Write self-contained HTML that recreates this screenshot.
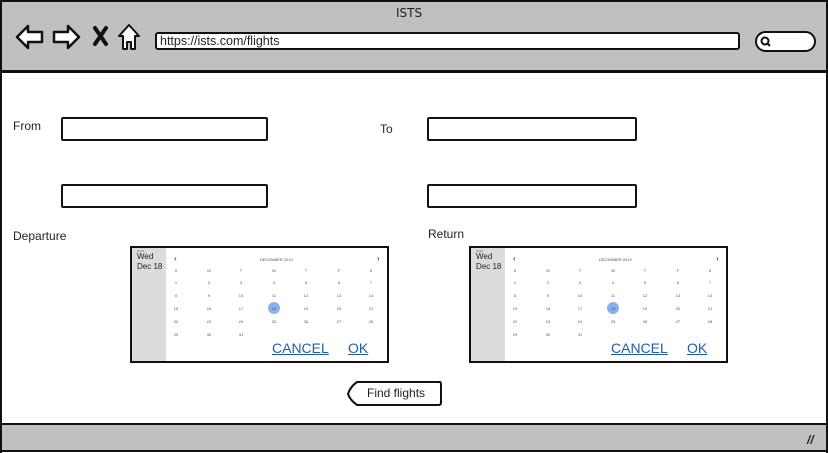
<!DOCTYPE html>
<html><head><style>
*{margin:0;padding:0;box-sizing:border-box}
body{width:828px;height:453px;background:#fff;position:relative;overflow:hidden;font-family:"Liberation Sans",sans-serif;color:#222}
.a{position:absolute}
.box{position:absolute;border:2px solid #111;background:#fff;border-radius:2px}
.lbl{position:absolute;font-size:12px}
.cal{position:absolute;width:259px;height:117px;border:2px solid #111;background:#fff}
.cal .side{position:absolute;left:0;top:0;width:34px;height:113px;background:#dcdcdc}
.cal .t{position:absolute;font-size:4px;color:#555;text-align:center;width:12px}
.cal .lnk{position:absolute;font-size:14px;color:#1f5fa8;text-decoration:underline}
</style></head><body>
<div class="a" style="left:0;top:0;width:828px;height:73px;background:#c0c0c0;border:2px solid #111;border-bottom:3px solid #111"></div>
<div class="a" style="left:396px;top:6px;font-size:12px;color:#222;font-family:'DejaVu Sans',sans-serif">ISTS</div>
<svg class="a" style="left:14px;top:22px" width="130" height="30" viewBox="0 0 130 30">
<path d="M3 15 L14 4 L14 10 L28 10 L28 20 L14 20 L14 26 Z" fill="#fff" stroke="#111" stroke-width="2.5" stroke-linejoin="round"/>
<path d="M65 15 L54 4 L54 10 L40 10 L40 20 L54 20 L54 26 Z" fill="#fff" stroke="#111" stroke-width="2.5" stroke-linejoin="round"/>
<path d="M81 6 L92 22 M92 6 L81 22" stroke="#111" stroke-width="4" stroke-linecap="round"/>
<path d="M115 3 L105 14 L109 14 L109 27 L113 27 L113 20 L117 20 L117 27 L121 27 L121 14 L125 14 Z" fill="#fff" stroke="#111" stroke-width="2" stroke-linejoin="round"/>
</svg>
<div class="box" style="left:155px;top:32px;width:585px;height:18px;border-radius:3px"></div>
<div class="a" style="left:160px;top:34px;font-size:12.5px">https://ists.com/flights</div>
<div class="box" style="left:755px;top:31px;width:61px;height:21px;border-radius:11px"></div>
<svg class="a" style="left:760px;top:36px" width="12" height="12"><circle cx="5" cy="5" r="3.5" fill="none" stroke="#111" stroke-width="2"/><path d="M7 7 L10 10" stroke="#111" stroke-width="2"/></svg>
<div class="a" style="left:0;top:72px;width:828px;height:381px;border-left:2px solid #111;border-right:2px solid #111"></div>
<div class="a" style="left:0;top:423px;width:828px;height:29px;background:#c0c0c0;border:2px solid #111"></div>
<div class="a" style="left:807px;top:433px;font-size:12px;font-weight:bold;font-style:italic">//</div>

<div class="lbl" style="left:13px;top:119px">From</div>
<div class="box" style="left:61px;top:117px;width:207px;height:24px"></div>
<div class="lbl" style="left:380px;top:122px">To</div>
<div class="box" style="left:427px;top:117px;width:210px;height:24px"></div>
<div class="box" style="left:61px;top:184px;width:207px;height:24px"></div>
<div class="box" style="left:427px;top:184px;width:210px;height:24px"></div>
<div class="lbl" style="left:13px;top:229px">Departure</div>
<div class="lbl" style="left:428px;top:227px">Return</div>

<div id="c1" class="cal" style="left:130px;top:246px"></div>
<div id="c2" class="cal" style="left:469px;top:246px"></div>

<svg class="a" style="left:345px;top:380px" width="98" height="28"><path d="M12 2 L95 2 Q96 2 96 5 L96 23 Q96 25 93 25 L12 25 Q5 20 3 14 Q5 7 12 2 Z" fill="#fff" stroke="#111" stroke-width="2"/></svg>
<div class="a" style="left:367px;top:386px;font-size:12px">Find flights</div>
<script>
function fill(id){
 var c=document.getElementById(id),h='<div class="side"></div>';
 h+='<div class="a" style="left:5px;top:1px;font-size:3px;color:#666">2019</div>';
 h+='<div class="a" style="left:5px;top:4px;font-size:8px">Wed</div>';
 h+='<div class="a" style="left:5px;top:14px;font-size:8px">Dec 18</div>';
 h+='<div class="a" style="left:42px;top:6px;font-size:8px">&#8249;</div>';
 h+='<div class="a" style="left:245px;top:6px;font-size:8px">&#8250;</div>';
 h+='<div class="a" style="left:128px;top:9px;font-size:4px;color:#555">DECEMBER 2019</div>';
 var xs=[44,77,109,142,174,207,239],d=['S','M','T','W','T','F','S'];
 for(var i=0;i<7;i++)h+='<div class="t" style="left:'+(xs[i]-6)+'px;top:20px">'+d[i]+'</div>';
 var ys=[32,45,58,71,84,97];
 for(var n=1;n<=31;n++){var p=n+6,r=Math.floor((n-1)/7),col=(n-1)%7;
  if(n==18)h+='<div class="a" style="left:'+(xs[col]-6)+'px;top:'+(ys[r]-4)+'px;width:12px;height:12px;border-radius:6px;background:#8ab1ee"></div>';
  h+='<div class="t" style="left:'+(xs[col]-6)+'px;top:'+ys[r]+'px">'+n+'</div>';}
 h+='<div class="lnk" style="left:140px;top:92px">CANCEL</div>';
 h+='<div class="lnk" style="left:216px;top:92px">OK</div>';
 c.innerHTML=h;}
fill('c1');fill('c2');
</script>
</body></html>
